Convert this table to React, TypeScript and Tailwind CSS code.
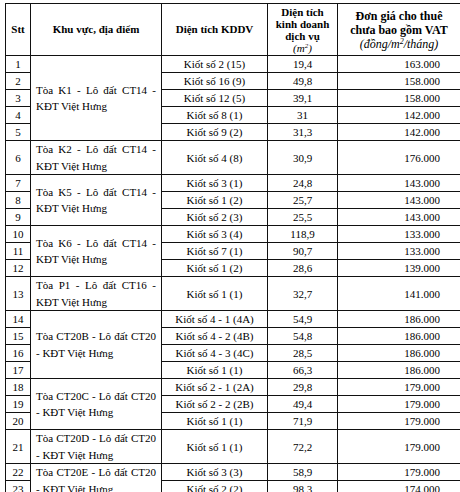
import React from "react";

type Row = [string, string, string];
type Group = { area: string; tall?: boolean; rows: Row[] };

const groups: Group[] = [
  {
    area: "Tòa K1 - Lô đất CT14 - KĐT Việt Hưng",
    rows: [
      ["Kiốt số 2 (15)", "19,4", "163.000"],
      ["Kiốt số 16 (9)", "49,8", "158.000"],
      ["Kiốt số 12 (5)", "39,1", "158.000"],
      ["Kiốt số 8 (1)", "31", "142.000"],
      ["Kiốt số 9 (2)", "31,3", "142.000"],
    ],
  },
  {
    area: "Tòa K2 - Lô đất CT14 - KĐT Việt Hưng",
    tall: true,
    rows: [["Kiốt số 4 (8)", "30,9", "176.000"]],
  },
  {
    area: "Tòa K5 - Lô đất CT14 - KĐT Việt Hưng",
    rows: [
      ["Kiốt số 3 (1)", "24,8", "143.000"],
      ["Kiốt số 1 (2)", "25,7", "143.000"],
      ["Kiốt số 2 (3)", "25,5", "143.000"],
    ],
  },
  {
    area: "Tòa K6 - Lô đất CT14 - KĐT Việt Hưng",
    rows: [
      ["Kiốt số 3 (4)", "118,9", "133.000"],
      ["Kiốt số 7 (1)", "90,7", "133.000"],
      ["Kiốt số 1 (2)", "28,6", "139.000"],
    ],
  },
  {
    area: "Tòa P1 - Lô đất CT16 - KĐT Việt Hưng",
    tall: true,
    rows: [["Kiốt số 1 (1)", "32,7", "141.000"]],
  },
  {
    area: "Tòa CT20B - Lô đất CT20 - KĐT Việt Hưng",
    rows: [
      ["Kiốt số 4 - 1 (4A)", "54,9", "186.000"],
      ["Kiốt số 4 - 2 (4B)", "54,8", "186.000"],
      ["Kiốt số 4 - 3 (4C)", "28,5", "186.000"],
      ["Kiốt số 1 (1)", "66,3", "186.000"],
    ],
  },
  {
    area: "Tòa CT20C - Lô đất CT20 - KĐT Việt Hưng",
    rows: [
      ["Kiốt số 2 - 1 (2A)", "29,8", "179.000"],
      ["Kiốt số 2 - 2 (2B)", "49,4", "179.000"],
      ["Kiốt số 1 (1)", "71,9", "179.000"],
    ],
  },
  {
    area: "Tòa CT20D - Lô đất CT20 - KĐT Việt Hưng",
    tall: true,
    rows: [["Kiốt số 1 (1)", "72,2", "179.000"]],
  },
  {
    area: "Tòa CT20E - Lô đất CT20 - KĐT Việt Hưng",
    rows: [
      ["Kiốt số 3 (3)", "58,9", "179.000"],
      ["Kiốt số 2 (2)", "98,3", "174.000"],
    ],
  },
];

const cell = "border border-[#111] p-0 font-['Liberation_Serif','Times_New_Roman',serif]";

export default function App() {
  let n = 0;
  return (
    <div className="bg-white w-[460px] h-[492px] overflow-hidden pt-[3px] pl-[5px] text-black font-['Liberation_Serif','Times_New_Roman',serif]">
      <table className="border-collapse table-fixed w-[455px] text-[11px] font-['Liberation_Serif','Times_New_Roman',serif]">
        <colgroup>
          <col className="w-[25px]" />
          <col className="w-[131px]" />
          <col className="w-[106px]" />
          <col className="w-[70px]" />
          <col className="w-[123px]" />
        </colgroup>
        <thead>
          <tr className="h-[52px]">
            <th className={`${cell} font-bold text-center align-middle`}>Stt</th>
            <th className={`${cell} font-bold text-center align-middle`}>Khu vực, địa điểm</th>
            <th className={`${cell} font-bold text-center align-middle`}>Diện tích KDDV</th>
            <th className={`${cell} px-[3px] font-bold text-center align-middle leading-[12px] text-[11px]`}>
              Diện tích kinh doanh dịch vụ
              <div className="font-normal italic">
                (m<sup className="text-[7px]">2</sup>)
              </div>
            </th>
            <th className={`${cell} font-bold text-center align-middle leading-[14px] text-[12px]`}>
              Đơn giá cho thuê
              <br />
              chưa bao gồm VAT
              <div className="font-normal italic">
                (đồng/m<sup className="text-[8px]">2</sup>/tháng)
              </div>
            </th>
          </tr>
        </thead>
        <tbody>
          {groups.map((g, gi) =>
            g.rows.map((r, ri) => {
              n += 1;
              return (
                <tr key={`${gi}-${ri}`} className={g.tall ? "h-[33.8px]" : "h-[16.9px]"}>
                  <td className={`${cell} text-center align-middle leading-[16px]`}>{n}</td>
                  {ri === 0 && (
                    <td
                      rowSpan={g.rows.length}
                      className={`${cell} px-[5px] text-justify align-middle leading-[16.5px]`}
                    >
                      {g.area}
                    </td>
                  )}
                  <td className={`${cell} text-center align-middle leading-[16px]`}>{r[0]}</td>
                  <td className={`${cell} text-center align-middle leading-[16px]`}>{r[1]}</td>
                  <td className={`${cell} text-right pr-[20px] align-middle leading-[16px]`}>{r[2]}</td>
                </tr>
              );
            })
          )}
        </tbody>
      </table>
    </div>
  );
}
